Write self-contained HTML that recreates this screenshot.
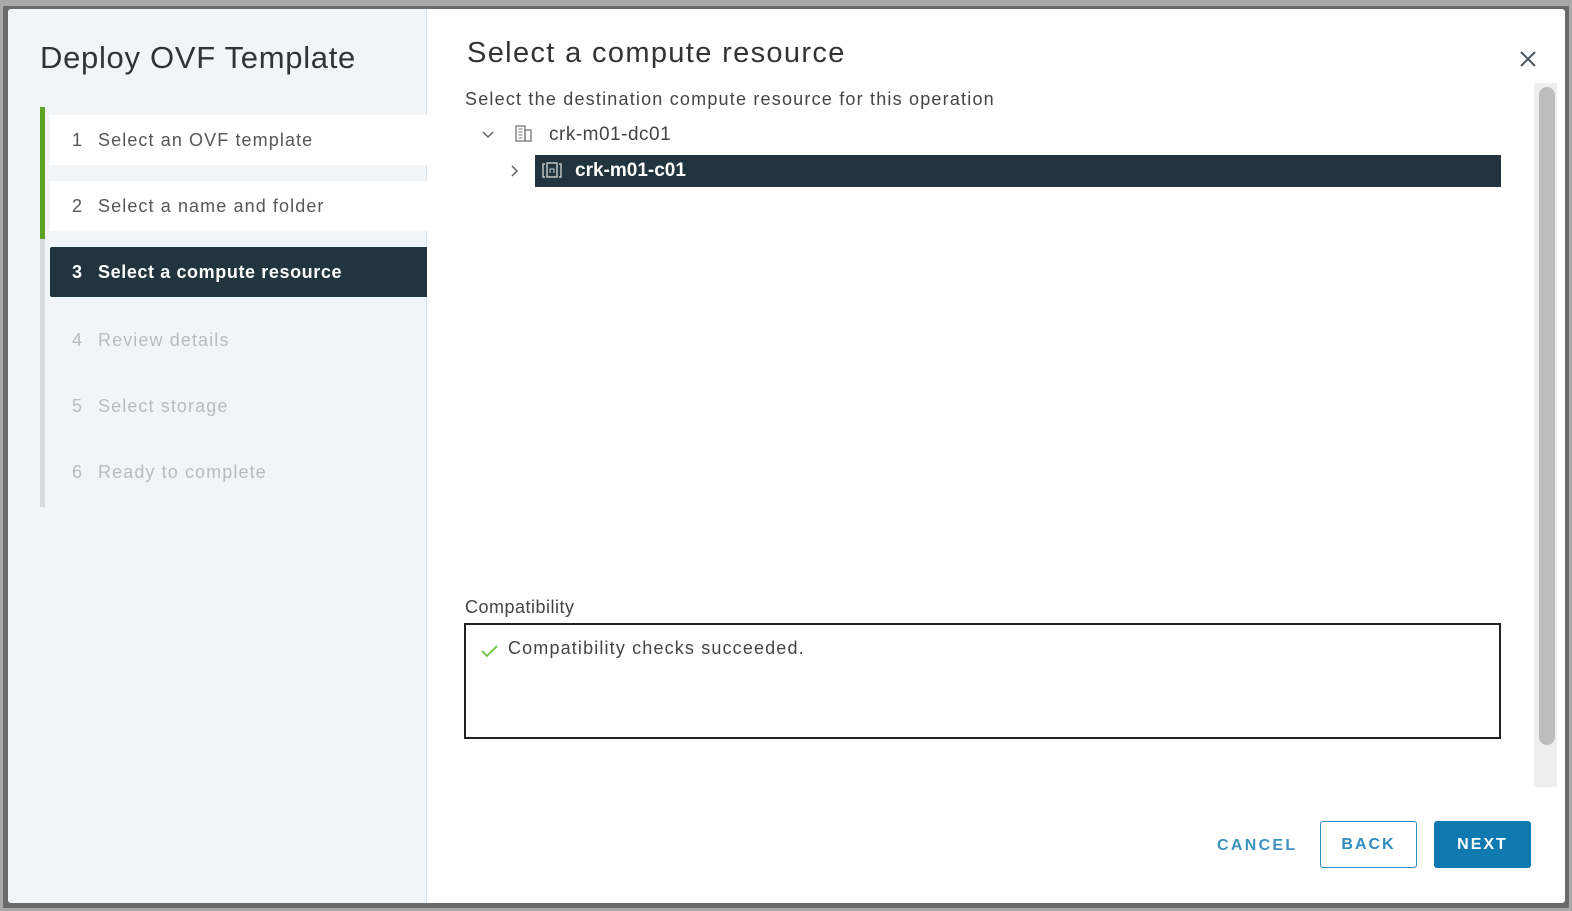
<!DOCTYPE html>
<html><head><style>
*{margin:0;padding:0;box-sizing:border-box}
body{width:1572px;height:911px;background:#a9a9a9;font-family:"Liberation Sans",sans-serif;position:relative;overflow:hidden}
.frame{position:absolute;left:3px;top:6px;width:1566px;height:902px;background:#6a6a6a}
.dlg{position:absolute;left:8px;top:9px;width:1557px;height:894px;background:#fff;border-radius:3px;overflow:hidden}
.left{position:absolute;left:0;top:0;width:419px;height:100%;background:#f1f5f8;border-right:1px solid #dce3e8}
.abs{position:absolute;white-space:nowrap}
.step{position:absolute;left:42px;width:377px;height:50px;font-size:18px;color:#565656;line-height:50px;letter-spacing:1.1px}
.step .n{position:absolute;left:22px}
.step .t{position:absolute;left:48px}
</style></head><body>
<div class="frame"></div>
<div class="dlg">
 <div class="left">
  <div class="abs" style="left:32px;top:31px;font-size:31px;color:#333;letter-spacing:0.7px">Deploy OVF Template</div>
  <div class="abs" style="left:32px;top:98px;width:5px;height:400px;background:#d4dbe0"></div>
  <div class="abs" style="left:32px;top:98px;width:5px;height:132px;background:#5aa220"></div>
  <div class="step" style="top:106px;background:#fff">
   <span class="n">1</span><span class="t">Select an OVF template</span></div>
  <div class="step" style="top:172px;background:#fff">
   <span class="n">2</span><span class="t">Select a name and folder</span></div>
  <div class="step" style="top:238px;background:#22343d;color:#fff;font-weight:bold;letter-spacing:0.6px;border-radius:2px 0 0 2px">
   <span class="n">3</span><span class="t">Select a compute resource</span></div>
  <div class="step" style="top:306px;color:#b5bcc1"><span class="n">4</span><span class="t">Review details</span></div>
  <div class="step" style="top:372px;color:#b5bcc1"><span class="n">5</span><span class="t">Select storage</span></div>
  <div class="step" style="top:438px;color:#b5bcc1"><span class="n">6</span><span class="t">Ready to complete</span></div>
 </div>
 <div class="abs" style="left:459px;top:28px;font-size:29px;color:#333;letter-spacing:1.35px">Select a compute resource</div>
 <svg class="abs" style="left:1510px;top:40px" width="20" height="20"><path d="M3 3L17 17M17 3L3 17" stroke="#49545c" stroke-width="2"/></svg>
 <div class="abs" style="left:457px;top:80px;font-size:18px;color:#444;letter-spacing:1.2px">Select the destination compute resource for this operation</div>
 <svg class="abs" style="left:473px;top:120px" width="14" height="12"><path d="M2 3L7 8L12 3" stroke="#666" stroke-width="1.5" fill="none"/></svg>
 <svg class="abs" style="left:506px;top:115px" width="20" height="20"><rect x="2" y="2" width="9" height="15" fill="none" stroke="#777" stroke-width="1.3"/><rect x="11" y="6" width="6" height="11" fill="none" stroke="#777" stroke-width="1.3"/><path d="M4.5 5h4M4.5 8h4M4.5 11h4M4.5 14h4" stroke="#777"/></svg>
 <div class="abs" style="left:541px;top:115px;font-size:19px;color:#444;letter-spacing:0.5px">crk-m01-dc01</div>
 <svg class="abs" style="left:501px;top:154px" width="12" height="16"><path d="M3 3L8 8L3 13" stroke="#666" stroke-width="1.5" fill="none"/></svg>
 <div class="abs" style="left:527px;top:146px;width:966px;height:32px;background:#22343d"></div>
 <svg class="abs" style="left:533px;top:151px" width="22" height="20"><path d="M4 4h-2v13h2M18 4h2v13h-2" stroke="#ccc" stroke-width="1.4" fill="none"/><rect x="6" y="3" width="10" height="14" fill="none" stroke="#ccc" stroke-width="1.4"/><path d="M9 13v-4h4v4" stroke="#ccc" fill="none"/></svg>
 <div class="abs" style="left:567px;top:151px;font-size:19px;color:#fff;font-weight:bold">crk-m01-c01</div>
 <div class="abs" style="left:457px;top:588px;font-size:18px;color:#444;letter-spacing:0.5px">Compatibility</div>
 <div class="abs" style="left:456px;top:614px;width:1037px;height:116px;border:2px solid #222"></div>
 <svg class="abs" style="left:472px;top:633px" width="22" height="18"><path d="M2 9L7 14L17 4" stroke="#6bbf3e" stroke-width="1.8" fill="none"/></svg>
 <div class="abs" style="left:500px;top:629px;font-size:18px;color:#444;letter-spacing:1.15px">Compatibility checks succeeded.</div>
 <div class="abs" style="left:1526px;top:74px;width:23px;height:704px;background:#eeeeee"></div>
 <div class="abs" style="left:1531px;top:78px;width:16px;height:658px;background:#bdbdbd;border-radius:8px"></div>
 <div class="abs" style="left:1209px;top:828px;font-size:16px;color:#1b7fb5;letter-spacing:2.3px;font-weight:bold;opacity:.85">CANCEL</div>
 <div class="abs" style="left:1312px;top:812px;width:97px;height:47px;border:1.5px solid #1b7fb5;border-radius:3px;color:#1b7fb5;font-size:16px;letter-spacing:2px;font-weight:bold;text-align:center;line-height:45px;opacity:.9">BACK</div>
 <div class="abs" style="left:1426px;top:812px;width:97px;height:47px;background:#0f79b0;border-radius:3px;color:#fff;font-size:16px;letter-spacing:2px;font-weight:bold;text-align:center;line-height:47px">NEXT</div>
</div>
</body></html>
